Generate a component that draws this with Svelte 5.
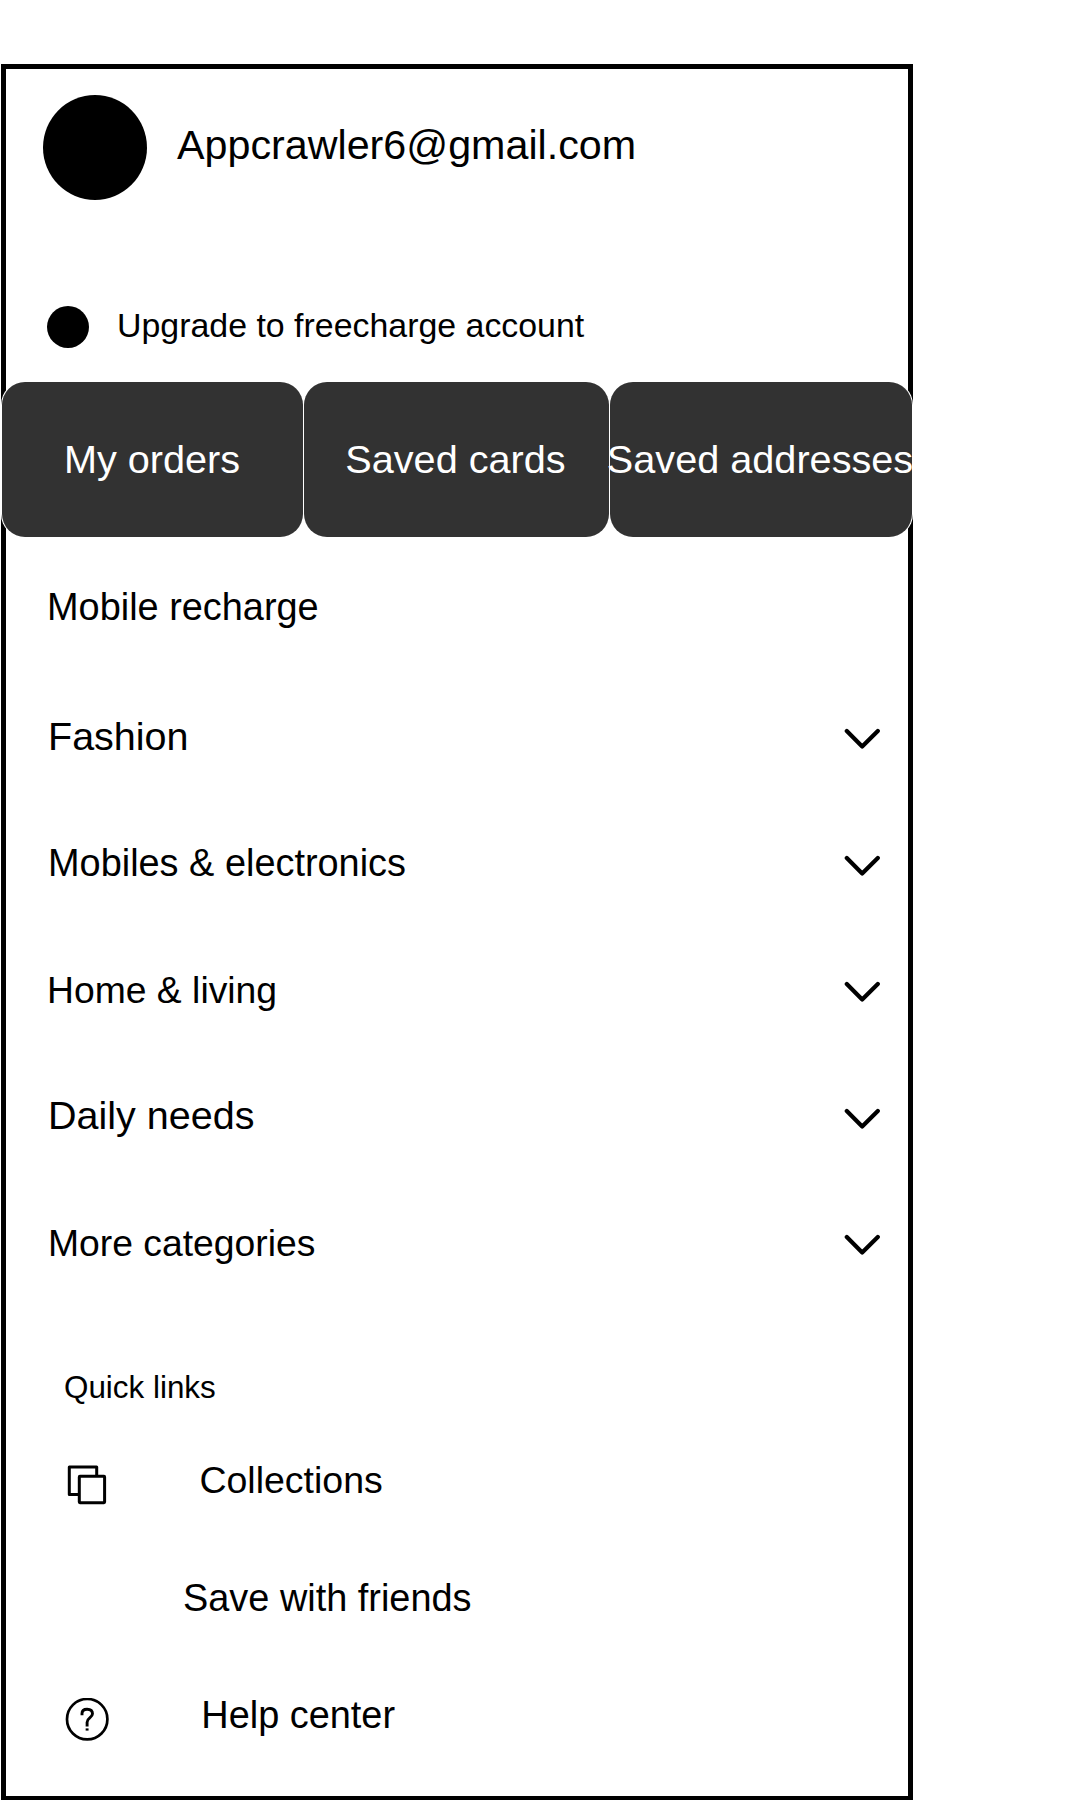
<script>
  const tabs = ['My orders', 'Saved cards', 'Saved addresses'];
  const categories = [
    { label: 'Fashion', kind: 'fashion' },
    { label: 'Mobiles & electronics', kind: 'mobiles' },
    { label: 'Home & living', kind: 'home' },
    { label: 'Daily needs', kind: 'daily' },
    { label: 'More categories', kind: 'more' }
  ];
  const links = [
    { label: 'Collections', kind: 'collections' },
    { label: 'Save with friends', kind: 'friends' },
    { label: 'Help center', kind: 'help' }
  ];
</script>

<aside class="drawer">
  <header class="profile">
    <span class="avatar"></span>
    <span class="email">Appcrawler6@gmail.com</span>
  </header>

  <div class="upgrade">
    <span class="dot"></span>
    <span class="upgrade-label">Upgrade to freecharge account</span>
  </div>

  <nav class="tabs">
    {#each tabs as tab}
      <div class="tab"><span>{tab}</span></div>
    {/each}
  </nav>

  <div class="recharge">Mobile recharge</div>

  <ul class="categories">
    {#each categories as item}
      <li class="category">
        <span class="label {item.kind}">{item.label}</span>
        <svg class="chevron" viewBox="0 0 36 22" width="36" height="22" aria-hidden="true">
          <path d="M2.8 3 L18.2 18.6 L33.8 3" />
        </svg>
      </li>
    {/each}
  </ul>

  <h2 class="heading">Quick links</h2>

  <ul class="links">
    {#each links as link}
      <li class="link">
        <span class="icon">
          {#if link.kind === 'collections'}
            <svg viewBox="0 0 44 44" width="44" height="44" aria-hidden="true">
              <path d="M13 30.4 H4.3 V3.1 H31.7 V11.5" />
              <rect x="14.3" y="12.3" width="25.3" height="26.4" rx="0.6" />
            </svg>
          {:else if link.kind === 'help'}
            <svg viewBox="0 0 44 44" width="44" height="44" aria-hidden="true">
              <circle class="ring" cx="22.2" cy="21.2" r="20.2" />
              <path class="mark" d="M17 17.2 V15.6 C17 12.8 19 11.2 22.1 11.2 C25.4 11.2 27.5 13 27.5 15.8 C27.5 19.6 22.1 19.6 22.1 24.2 V28.4" />
              <path class="mark" d="M22.1 30.4 V32.6" />
            </svg>
          {/if}
        </span>
        <span class="link-label {link.kind}">{link.label}</span>
      </li>
    {/each}
  </ul>
</aside>

<style>
  :global(body) {
    margin: 0;
    background: #fff;
  }

  .drawer {
    box-sizing: border-box;
    display: flex;
    flex-direction: column;
    width: 912px;
    height: 1736px;
    margin: 64px 0 0 1px;
    border: 5px solid #000;
    border-bottom-width: 4px;
    background: #fff;
    color: #000;
    font-family: 'Liberation Sans', Arial, sans-serif;
    white-space: nowrap;
  }

  ul {
    margin: 0;
    padding: 0;
    list-style: none;
  }

  .profile {
    display: flex;
    align-items: center;
    gap: 30px;
    height: 105px;
    padding: 26px 0 0 37px;
  }

  .avatar {
    width: 104px;
    height: 105px;
    border-radius: 50%;
    background: #000;
  }

  .email {
    padding-bottom: 6px;
    font-size: 41.25px;
    line-height: 48px;
  }

  .upgrade {
    display: flex;
    align-items: center;
    gap: 28px;
    height: 42px;
    margin-top: 106px;
    padding-left: 41px;
  }

  .dot {
    width: 42px;
    height: 42px;
    border-radius: 50%;
    background: #000;
  }

  .upgrade-label {
    padding-bottom: 4px;
    font-size: 33.9px;
    line-height: 40px;
  }

  .tabs {
    display: grid;
    grid-template-columns: 301px 305px 302px;
    gap: 1px;
    height: 155px;
    margin: 34px -4px 0;
  }

  .tab {
    display: flex;
    align-items: center;
    justify-content: center;
    border-radius: 23px;
    background: #323232;
    box-shadow: 0 0 0 1px #fff;
    color: #fff;
    font-size: 39.65px;
    line-height: 46px;
  }

  .tab span {
    margin-right: 2px;
    padding-bottom: 2px;
  }

  .tab:first-child span {
    margin-right: 1px;
  }

  .recharge {
    margin-top: 48px;
    padding-left: 41px;
    font-size: 37.9px;
    line-height: 44px;
  }

  .categories {
    display: grid;
    grid-template-rows: repeat(5, 126.5px);
    margin-top: 46px;
  }

  .category {
    display: flex;
    align-items: center;
    justify-content: space-between;
    padding: 0 28px 0 42px;
  }

  .label {
    padding-bottom: 4px;
    line-height: 46px;
  }

  .fashion { font-size: 39.5px; }
  .mobiles { font-size: 37.9px; }
  .home { margin-left: -1px; font-size: 37.3px; padding-bottom: 2px; }
  .daily { font-size: 39.5px; padding-bottom: 5px; }
  .more { font-size: 37.3px; padding-bottom: 3px; }

  .chevron {
    margin-top: 2px;
  }

  .chevron path {
    fill: none;
    stroke: #000;
    stroke-width: 4.2;
    stroke-linecap: round;
    stroke-linejoin: round;
  }

  .heading {
    margin: 62px 0 0;
    padding-left: 58px;
    font-size: 31.4px;
    font-weight: 400;
    line-height: 36px;
  }

  .links {
    display: grid;
    grid-template-rows: repeat(3, 117px);
    margin-top: 17px;
  }

  .link {
    display: flex;
    align-items: center;
    padding-left: 59px;
  }

  .icon {
    width: 44px;
    height: 44px;
    margin-top: 9px;
  }

  .icon svg {
    display: block;
    fill: none;
    stroke: #000;
    stroke-width: 3;
    stroke-linejoin: round;
  }

  .icon .ring {
    stroke-width: 2.7;
  }

  .icon .mark {
    stroke-width: 2.9;
  }

  .link-label {
    line-height: 44px;
  }

  .collections { margin-left: 90.4px; padding-bottom: 3px; font-size: 37.5px; }
  .friends { margin-left: 74px; font-size: 37.9px; }
  .help { margin-left: 92.3px; font-size: 37.9px; }
</style>
